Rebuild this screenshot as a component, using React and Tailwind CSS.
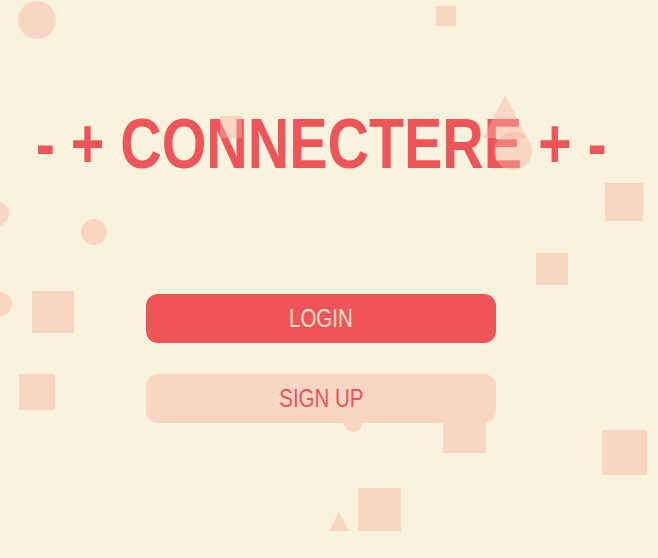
import React from 'react';

// decorative shapes scattered on the canvas (behind content)
const backShapes = [
    { kind: 'circle', x: 18, y: 1, s: 38 },
    { kind: 'square', x: 436, y: 6, s: 20 },
    { kind: 'circle', x: -16, y: 201, s: 25 },
    { kind: 'circle', x: 81, y: 219, s: 26 },
    { kind: 'circle', x: -12, y: 292, s: 24 },
    { kind: 'square', x: 32, y: 291, s: 42 },
    { kind: 'square', x: 19, y: 374, s: 36 },
    { kind: 'square', x: 605, y: 183, s: 38 },
    { kind: 'square', x: 536, y: 253, s: 32 },
    { kind: 'square', x: 602, y: 430, s: 45 },
    { kind: 'square', x: 443, y: 410, s: 43 },
    { kind: 'circle', x: 344, y: 414, s: 18 },
    { kind: 'square', x: 358, y: 488, s: 43 },
];

const Shape = ({ kind, x, y, s }) => (
    <div
        className={`absolute bg-[#f9d6c4] ${kind === 'circle' ? 'rounded-full' : ''}`}
        style={{ left: x, top: y, width: s, height: s }}
    />
);

const App = () => {
    return (
        <div className="relative w-[658px] h-[558px] overflow-hidden bg-[#f9f2dc] font-['Liberation_Sans',Arial,sans-serif]">
            {backShapes.map((sh, i) => (
                <Shape key={i} {...sh} />
            ))}

            {/* small triangle near the bottom */}
            <svg className="absolute left-[329px] top-[512px]" width="20" height="19" viewBox="0 0 20 19">
                <polygon points="10,0 20,19 0,19" fill="#f9d6c4" />
            </svg>

            {/* Content */}
            <div className="relative z-10 w-[642px] flex flex-col items-center">
                <h1 className="mt-[104px] text-[70px] leading-[80px] font-bold text-[#ef5558] whitespace-nowrap">
                    <span className="inline-block scale-x-[0.82]">- + CONNECTERE + -</span>
                </h1>

                <div className="mt-[110px] flex flex-col gap-[31px]">
                    <button className="w-[350px] h-[49px] rounded-[12px] bg-[#ef5558] text-[#fde0c8] text-[25px]">
                        <span className="inline-block scale-x-[0.82]">LOGIN</span>
                    </button>
                    <button className="w-[350px] h-[49px] rounded-[12px] bg-[#f9d6c4] text-[#e9555a] text-[25px]">
                        <span className="inline-block scale-x-[0.82]">SIGN UP</span>
                    </button>
                </div>
            </div>

            {/* shapes drifting over the title */}
            <div className="absolute z-20 left-[220px] top-[116px] w-[22px] h-[22px] bg-[#f9b4a7]/45" />
            <svg className="absolute z-20 left-[483px] top-[95px]" width="50" height="76" viewBox="0 0 50 76">
                <polygon points="22,0 44,43 0,43" fill="#f9b4a7" fillOpacity="0.45" />
                <circle cx="30" cy="56" r="19" fill="#f9b4a7" fillOpacity="0.45" />
            </svg>
        </div>
    );
};

export default App;
